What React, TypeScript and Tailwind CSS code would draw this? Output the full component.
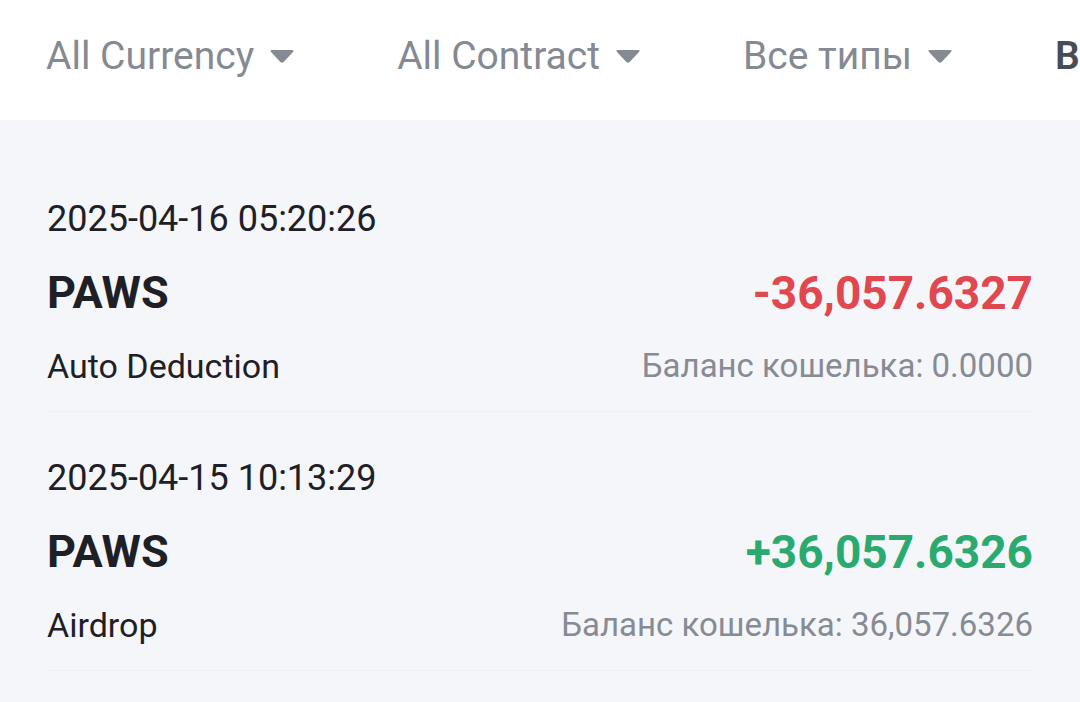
import React from 'react';

type Rec = {
  time: string;
  coin: string;
  amount: string;
  kind: string;
  balance: string;
  positive: boolean;
};

const records: Rec[] = [
  {
    time: '2025-04-16 05:20:26',
    coin: 'PAWS',
    amount: '-36,057.6327',
    kind: 'Auto Deduction',
    balance: '0.0000',
    positive: false,
  },
  {
    time: '2025-04-15 10:13:29',
    coin: 'PAWS',
    amount: '+36,057.6326',
    kind: 'Airdrop',
    balance: '36,057.6326',
    positive: true,
  },
];

const Caret = () => (
  <svg width="26" height="16" viewBox="0 0 26 16" className="shrink-0">
    <path
      d="M3 2 H23 Q25.5 2 24 4 L14.6 14 Q13 15.6 11.4 14 L2 4 Q0.5 2 3 2 Z"
      fill="#858a92"
    />
  </svg>
);

const Filter = ({ label }: { label: string }) => (
  <div className="flex items-center gap-[15px] shrink-0">
    <span className="text-[39px] text-[#858a92]">{label}</span>
    <Caret />
  </div>
);

export default function App() {
  return (
    <div
      className="w-[1080px] h-[702px] overflow-hidden bg-[#f5f6fa]"
      style={{ fontFamily: 'Roboto, "Noto Sans", sans-serif' }}
    >
      {/* filter tabs */}
      <div className="h-[120px] bg-white flex items-center pl-[46px] pb-[8px] gap-[102px] overflow-hidden whitespace-nowrap">
        <Filter label="All Currency" />
        <Filter label="All Contract" />
        <Filter label="Все типы" />
        <span className="text-[39px] font-semibold text-[#474d57] shrink-0">Все время</span>
      </div>

      <div className="px-[47px] pt-[33px]">
        {records.map((r) => (
          <div key={r.time} className="pt-[42px] pb-[21px] border-b border-[#eff1f5]">
            <div className="h-12 flex items-center text-[36px] text-[#1e2026]">{r.time}</div>
            <div className="mt-[22px] h-14 flex items-center justify-between">
              <span className="text-[45px] font-bold text-[#1e2026]">{r.coin}</span>
              <span
                className={
                  r.positive
                    ? 'text-[46px] font-bold text-[#2aaa6f]'
                    : 'text-[46px] font-bold text-[#e0474f]'
                }
              >
                {r.amount}
              </span>
            </div>
            <div className="mt-[21px] h-12 flex items-center justify-between">
              <span className="text-[34px] text-[#1e2026]">{r.kind}</span>
              <span className="text-[33px] text-[#878b93]">Баланс кошелька: {r.balance}</span>
            </div>
          </div>
        ))}
      </div>
    </div>
  );
}
